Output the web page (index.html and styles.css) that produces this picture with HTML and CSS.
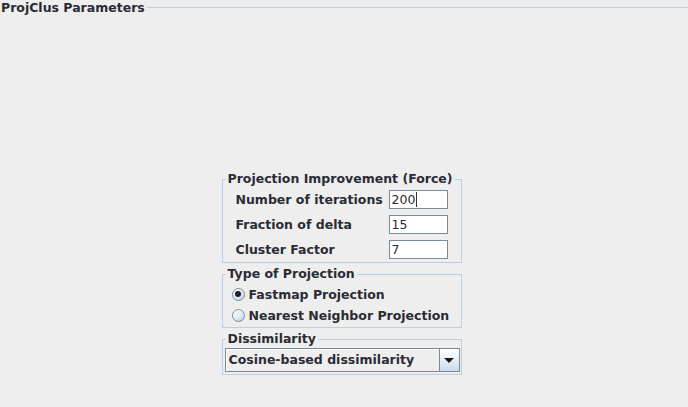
FILE: index.html
```html
<!DOCTYPE html>
<html>
<head>
<meta charset="utf-8">
<link rel="stylesheet" href="styles.css">
</head>
<body>
<div class="frame">
  <div class="frame-head">
    <span class="frame-title">ProjClus Parameters</span>
    <span class="frame-line"></span>
  </div>
  <div class="frame-body">
    <div class="panel">
      <fieldset class="group">
        <legend>Projection Improvement (Force)</legend>
        <div class="force-body">
          <div class="row">
            <span class="lbl">Number of iterations</span>
            <span class="field">200<span class="caret"></span></span>
          </div>
          <div class="row">
            <span class="lbl">Fraction of delta</span>
            <span class="field">15</span>
          </div>
          <div class="row">
            <span class="lbl">Cluster Factor</span>
            <span class="field">7</span>
          </div>
        </div>
      </fieldset>
      <fieldset class="group">
        <legend>Type of Projection</legend>
        <div class="type-body">
          <div class="radio-row">
            <span class="radio checked"></span>
            <span class="radio-lbl">Fastmap Projection</span>
          </div>
          <div class="radio-row">
            <span class="radio"></span>
            <span class="radio-lbl">Nearest Neighbor Projection</span>
          </div>
        </div>
      </fieldset>
      <fieldset class="group">
        <legend>Dissimilarity</legend>
        <div class="dis-body">
          <div class="combo">
            <span class="combo-text">Cosine-based dissimilarity</span>
            <span class="combo-btn"><span class="arrow"></span></span>
          </div>
        </div>
      </fieldset>
    </div>
  </div>
</div>
</body>
</html>
```

FILE: styles.css
```css
html, body {
  margin: 0;
  padding: 0;
  background: #eeeeee;
}
body {
  width: 688px;
  height: 407px;
  overflow: hidden;
  font-family: "DejaVu Sans", sans-serif;
  font-weight: bold;
  font-size: 12.5px;
  color: #2b2b35;
}
.frame {
  display: flex;
  flex-direction: column;
  height: 407px;
}
.frame-head {
  display: flex;
  align-items: center;
  height: 16px;
}
.frame-title {
  padding-left: 1px;
  padding-right: 2px;
  line-height: 16px;
  white-space: nowrap;
}
.frame-line {
  flex: 1;
  height: 1px;
  background: #b8cfe5;
  margin-top: -1px;
}
.frame-body {
  display: flex;
  justify-content: center;
  padding-top: 156px;
  padding-right: 5px;
}
.panel {
  width: 240px;
  display: flex;
  flex-direction: column;
  gap: 4px;
}
.group {
  margin: 0;
  padding: 0;
  border: 1px solid #b8cfe5;
  min-width: 0;
}
.group legend {
  padding: 0 2px;
  margin-left: 3px;
  line-height: 14px;
  font-weight: bold;
  white-space: nowrap;
}
.force-body {
  padding: 4px 13px 3px 13px;
  display: flex;
  flex-direction: column;
  gap: 6px;
}
.row {
  display: flex;
  align-items: center;
  justify-content: space-between;
  height: 19px;
  white-space: nowrap;
}
.field {
  box-sizing: border-box;
  width: 59px;
  height: 19px;
  background: #ffffff;
  border: 1px solid #7a8a99;
  font-weight: normal;
  font-size: 12.5px;
  line-height: 17px;
  padding-left: 2px;
  display: flex;
  align-items: center;
}
.caret {
  display: inline-block;
  width: 1px;
  height: 15px;
  background: #333333;
  margin-left: 1px;
}
.type-body {
  padding: 4px 0 3px 9px;
  display: flex;
  flex-direction: column;
  gap: 3px;
}
.radio-row {
  display: flex;
  align-items: center;
  height: 18px;
  white-space: nowrap;
}
.radio {
  box-sizing: border-box;
  width: 13px;
  height: 13px;
  border-radius: 50%;
  border: 1px solid #7a8a99;
  background: linear-gradient(135deg, #ffffff 0%, #dde8f3 60%, #b8cfe5 100%);
  display: flex;
  align-items: center;
  justify-content: center;
  margin-right: 4px;
}
.radio.checked::after {
  content: "";
  width: 6px;
  height: 6px;
  border-radius: 50%;
  background: #222222;
}
.dis-body {
  padding: 2px 2px 2px 2px;
}
.combo {
  box-sizing: border-box;
  height: 24px;
  width: 235px;
  display: flex;
  border: 1px solid #7a8a99;
  background: #eeeeee;
}
.combo-text {
  flex: 1;
  padding-left: 3px;
  line-height: 22px;
  border-right: 1px solid #7a8a99;
  background: #eeeeee;
  box-shadow: inset 1px 1px 0 #ffffff;
  white-space: nowrap;
}
.combo-btn {
  width: 19px;
  display: flex;
  align-items: center;
  justify-content: center;
  background: linear-gradient(180deg, #ffffff 0%, #e6eef6 50%, #c9daea 100%);
}
.arrow {
  width: 0;
  height: 0;
  border-left: 5px solid transparent;
  border-right: 5px solid transparent;
  border-top: 5px solid #1a1a1a;
  margin-top: 1px;
}
```
